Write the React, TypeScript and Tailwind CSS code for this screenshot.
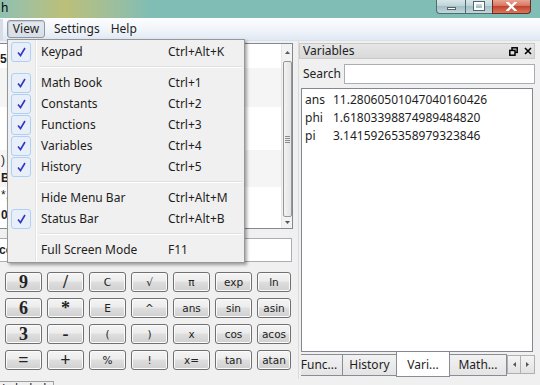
import React from "react";

const keypad: { t: string; big?: boolean }[][] = [
  [{ t: "9", big: true }, { t: "/", big: true }, { t: "C" }, { t: "√" }, { t: "π" }, { t: "exp" }, { t: "ln" }],
  [{ t: "6", big: true }, { t: "*", big: true }, { t: "E" }, { t: "^" }, { t: "ans" }, { t: "sin" }, { t: "asin" }],
  [{ t: "3", big: true }, { t: "-", big: true }, { t: "(" }, { t: ")" }, { t: "x" }, { t: "cos" }, { t: "acos" }],
  [{ t: "=", big: true }, { t: "+", big: true }, { t: "%" }, { t: "!" }, { t: "x=" }, { t: "tan" }, { t: "atan" }],
];

type MenuEntry = { label: string; keys: string; checked?: boolean } | "sep";

const menu: MenuEntry[] = [
  { label: "Keypad", keys: "Ctrl+Alt+K", checked: true },
  "sep",
  { label: "Math Book", keys: "Ctrl+1", checked: true },
  { label: "Constants", keys: "Ctrl+2", checked: true },
  { label: "Functions", keys: "Ctrl+3", checked: true },
  { label: "Variables", keys: "Ctrl+4", checked: true },
  { label: "History", keys: "Ctrl+5", checked: true },
  "sep",
  { label: "Hide Menu Bar", keys: "Ctrl+Alt+M" },
  { label: "Status Bar", keys: "Ctrl+Alt+B", checked: true },
  "sep",
  { label: "Full Screen Mode", keys: "F11" },
];

const variables = [
  { name: "ans", value: "11.28060501047040160426" },
  { name: "phi", value: "1.61803398874989484820" },
  { name: "pi", value: "3.14159265358979323846" },
];

function TitleBar() {
  return (
    <div className="h-[18px] w-full shrink-0 flex items-start bg-linear-to-r from-[#8fc0b2] from-0% via-[#bcbf78] via-12% to-[#80bdb5] to-28%">
      <span className="pl-[1px] leading-[16px] text-[12px] text-black">h</span>
      <div className="ml-auto mr-[9px] flex h-[14px]">
        {/* minimize */}
        <div className="w-[30px] h-[14px] border border-[#4f6a70] border-t-0 rounded-bl-[4px] bg-[linear-gradient(#d6e6e8,#bcd2d6_50%,#a3bec4_50%,#c0d8dc)] flex items-end justify-center pb-[3px]">
          <div className="w-[9px] h-[3px] bg-white border border-[#54656a]" />
        </div>
        {/* maximize */}
        <div className="w-[26px] h-[14px] border-b border-[#4f6a70] bg-[linear-gradient(#d6e6e8,#bcd2d6_50%,#a3bec4_50%,#c0d8dc)] flex items-center justify-center">
          <div className="w-[10px] h-[8px] border-2 border-white outline outline-1 outline-[#54656a] -mt-[2px]" />
        </div>
        {/* close */}
        <div className="w-[39px] h-[14px] border border-[#6b2b22] border-t-0 rounded-br-[4px] bg-[linear-gradient(#e8a493,#d66f5c_50%,#c5432c_50%,#d6785f)] flex items-center justify-center">
          <svg width="11" height="9" viewBox="0 0 11 9">
            <path d="M1.5 0.5 L9.5 8.5 M9.5 0.5 L1.5 8.5" stroke="#ffffff" strokeWidth="2.4" strokeLinecap="square" />
          </svg>
        </div>
      </div>
    </div>
  );
}

function MenuBar() {
  return (
    <div className="h-[23px] flex items-start border-t border-[#fdfdfe] bg-[linear-gradient(#fbfcfe,#eef3f9_60%,#dfe8f4)] border-b border-b-[#d8e0ea]">
      <div className="w-[3px] h-full bg-[#d6dde6]" />
      <div className="ml-[4px] mt-[1px] h-[18px] w-[38px] rounded-[3px] border border-[#8d98a6] bg-[linear-gradient(#e4e8ee,#d8dee6)] shadow-[inset_1px_1px_1px_rgba(0,0,0,0.12)] flex items-center justify-center text-[12px] text-[#1e1e1e]">
        View
      </div>
      <span className="ml-[9px] mt-[1px] leading-[18px] text-[12px] text-[#1e1e1e]">Settings</span>
      <span className="ml-[11px] mt-[1px] leading-[18px] text-[12px] text-[#1e1e1e]">Help</span>
    </div>
  );
}

function Results() {
  return (
    <div className="mt-[2px] h-[186px] w-[294px] -ml-[1px] border border-[#828790] bg-white flex overflow-hidden">
      <div className="flex-1 flex flex-col text-[12px] font-['Liberation_Sans',sans-serif]">
        <div className="h-[24px] flex items-end pl-[1px]">
          <span className="font-bold -ml-[1px]">56</span>
        </div>
        <div className="h-[39px] bg-[#f5f5f5]" />
        <div className="h-[43px]" />
        <div className="h-[37px] bg-[#f5f5f5] flex flex-col justify-end pl-[1px] leading-[14px] pb-[2px]">
          <span>)</span>
          <span className="mt-[4px] font-bold">B4</span>
        </div>
        <div className="flex-1 flex flex-col pl-[1px] leading-[14px] pt-[1px]">
          <span>*,</span>
          <span className="mt-[6px] font-bold">0:</span>
        </div>
      </div>
      {/* scrollbar */}
      <div className="w-[11px] h-full bg-[#f2f2f2] border-l border-[#e6e6e6] flex flex-col items-center">
        <div className="h-[16px] flex items-center justify-center">
          <svg width="5" height="3" viewBox="0 0 5 3"><path d="M0 3 L2.5 0 L5 3 Z" fill="#555" /></svg>
        </div>
        <div className="w-[9px] h-[156px] mt-[1px] rounded-[2px] border border-[#979797] bg-[linear-gradient(90deg,#f3f3f3,#e3e3e3)] flex flex-col items-center justify-center gap-[1px]">
          <div className="w-[5px] h-[1px] bg-[#8a8a8a]" />
          <div className="w-[5px] h-[1px] bg-[#8a8a8a]" />
          <div className="w-[5px] h-[1px] bg-[#8a8a8a]" />
          <div className="w-[5px] h-[1px] bg-[#8a8a8a]" />
        </div>
        <div className="flex-1 flex items-center justify-center">
          <svg width="5" height="3" viewBox="0 0 5 3"><path d="M0 0 L2.5 3 L5 0 Z" fill="#555" /></svg>
        </div>
      </div>
    </div>
  );
}

function Keypad() {
  return (
    <div className="mt-[10px] ml-[5px] grid grid-cols-[repeat(6,37px)_34px] gap-x-[5px] gap-y-[6px]">
      {keypad.flat().map((k, i) => (
        <div
          key={i}
          className={`h-[20px] rounded-[3px] border border-[#707070] bg-[linear-gradient(#f4f4f4,#ececec_45%,#dedede_50%,#d0d0d0)] shadow-[inset_0_0_0_1px_#fbfbfb] flex items-center justify-center text-[#222] ${
            k.big
              ? "font-['Liberation_Serif',serif] font-bold text-[18px] leading-none"
              : "font-['DejaVu_Sans',sans-serif] text-[10.5px] leading-none"
          }`}
        >
          {k.t}
        </div>
      ))}
    </div>
  );
}

function LeftPane() {
  return (
    <div className="w-[293px] flex flex-col">
      <Results />
      <div className="mt-[9px] h-[24px] w-[293px] -ml-[1px] border border-[#abadb3] bg-white flex items-center">
        <span className="font-bold text-[12px] font-['Liberation_Sans',sans-serif] -ml-[1px]">cc</span>
      </div>
      <Keypad />
    </div>
  );
}

function Dock() {
  return (
    <div className="ml-[5px] w-[237px] flex flex-col border-l border-[#dadada]">
      <div className="mt-[2px] h-[16px] bg-[linear-gradient(#e6e6e6,#d9d9d9)] border border-[#c9c9c9] flex items-center pl-[3px] text-[12px] text-[#222]">
        <span>Variables</span>
        <div className="ml-auto flex items-center gap-[6px] pr-[2px]">
          <svg width="9" height="9" viewBox="0 0 9 9">
            <rect x="3" y="0.8" width="5.2" height="4.6" fill="none" stroke="#000" strokeWidth="1.5" />
            <rect x="0.8" y="3.4" width="5.2" height="4.8" fill="#e0e0e0" stroke="#000" strokeWidth="1.5" />
          </svg>
          <svg width="8" height="8" viewBox="0 0 8 8">
            <path d="M1 1 L7 7 M7 1 L1 7" stroke="#000" strokeWidth="1.6" />
          </svg>
        </div>
      </div>
      <div className="mt-[5px] flex items-center h-[20px]">
        <span className="ml-[4px] text-[12px] text-[#222]">Search</span>
        <div className="ml-auto h-[20px] w-[191px] border border-[#abadb3] bg-white" />
      </div>
      <div className="mt-[4px] ml-[2px] w-[232px] h-[264px] border border-[#828790] bg-white pl-[3px] pt-[2px] text-[12px] text-[#1e1e1e]">
        {variables.map((v) => (
          <div key={v.name} className="h-[18px] flex items-center">
            <span className="w-[28px]">{v.name}</span>
            <span>{v.value}</span>
          </div>
        ))}
      </div>
      <div className="ml-[2px] h-[26px] flex items-start text-[12px] text-[#1e1e1e]">
        <div className="w-[208px] h-full overflow-hidden flex items-start">
          <div className="mt-[2px] -ml-[6px] w-[48px] h-[22px] shrink-0 border border-[#898c95] bg-[linear-gradient(#f2f2f2,#e4e4e4)] flex items-center justify-center">Func...</div>
          <div className="mt-[2px] -ml-[1px] w-[55px] h-[22px] shrink-0 border border-[#898c95] bg-[linear-gradient(#f2f2f2,#e4e4e4)] flex items-center justify-center">History</div>
          <div className="w-[54px] h-[25px] shrink-0 border border-t-0 border-[#898c95] bg-white flex items-center justify-center -ml-[1px] pt-[1px]">Vari...</div>
          <div className="mt-[2px] -ml-[1px] w-[58px] h-[22px] shrink-0 border border-[#898c95] bg-[linear-gradient(#f2f2f2,#e4e4e4)] flex items-center justify-center">Math...</div>
        </div>
        <div className="mt-[3px] flex">
          <div className="w-[14px] h-[19px] border border-[#b0b0b0] bg-[linear-gradient(#f4f4f4,#e2e2e2)] flex items-center justify-center">
            <svg width="3" height="5" viewBox="0 0 3 5"><path d="M3 0 L0 2.5 L3 5 Z" fill="#555" /></svg>
          </div>
          <div className="w-[14px] h-[19px] border border-l-0 border-[#b0b0b0] bg-[linear-gradient(#f4f4f4,#e2e2e2)] flex items-center justify-center">
            <svg width="3" height="5" viewBox="0 0 3 5"><path d="M0 0 L3 2.5 L0 5 Z" fill="#555" /></svg>
          </div>
        </div>
      </div>
    </div>
  );
}

function ViewMenu() {
  return (
    <div className="absolute left-[7px] top-[39px] w-[238px] border border-[#979797] bg-[#f0f0f0] shadow-[2px_2px_3px_rgba(0,0,0,0.35)] pt-[1px] pb-[2px] text-[12px] text-[#1e1e1e]">
      {/* gutter line */}
      <div className="absolute left-[27px] top-0 bottom-0 w-[2px] border-l border-[#e2e3e3] bg-white" />
      {menu.map((m, i) =>
        m === "sep" ? (
          <div key={i} className="h-[10px] flex items-center pl-[31px] pr-[2px]">
            <div className="w-full h-[2px] border-t border-[#e0e0e0] bg-white" />
          </div>
        ) : (
          <div key={i} className="relative h-[21px] flex items-center">
            <div className="w-[22px] ml-[2px] flex items-center justify-center">
              {m.checked && (
                <div className="w-[20px] h-[20px] rounded-[3px] border border-[#aecff7] bg-[#e8eff9] flex items-center justify-center">
                  <svg width="9" height="10" viewBox="0 0 9 10">
                    <path d="M1 5.5 L3.5 8.5 L8 1" fill="none" stroke="#2f36c4" strokeWidth="1.6" />
                  </svg>
                </div>
              )}
            </div>
            <span className="ml-[9px] w-[127px]">{m.label}</span>
            <span>{m.keys}</span>
          </div>
        )
      )}
    </div>
  );
}

export default function App() {
  return (
    <div className="relative w-[540px] h-[385px] overflow-hidden bg-[#f0f0f0] font-['Noto_Sans',sans-serif] text-[12px] text-[#1e1e1e]">
      <TitleBar />
      <MenuBar />
      <div className="flex h-[338px]">
        <LeftPane />
        <Dock />
      </div>
      <div className="h-[6px] flex">
        <div className="mt-[2px] w-[55px] h-[12px] border border-[#a0a0a0] overflow-hidden text-[12px] leading-[14px] pl-[2px] -ml-[1px]">
          Labeled
        </div>
      </div>
      <ViewMenu />
    </div>
  );
}
